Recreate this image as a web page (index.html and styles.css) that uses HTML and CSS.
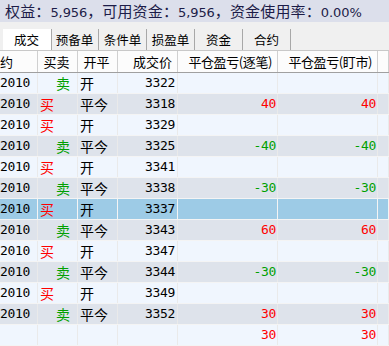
FILE: index.html
```html
<!DOCTYPE html>
<html>
<head>
<meta charset="utf-8">
<link rel="stylesheet" href="styles.css">
</head>
<body>
<div class="topbar">权益：<span class="tn">5,956</span>，可用资金：<span class="tn">5,956</span>，资金使用率：<span class="tn">0.00%</span></div>
<div class="tabs">
  <div class="tab active">成交</div>
  <div class="tab">预备单</div>
  <div class="tab">条件单</div>
  <div class="tab">损盈单</div>
  <div class="tab">资金</div>
  <div class="tab">合约</div>
</div>
<div class="grid">
  <div class="row head">
    <div class="c c1">约</div>
    <div class="c c2">买卖</div>
    <div class="c c3">开平</div>
    <div class="c c4">成交价</div>
    <div class="c c5">平仓盈亏(逐笔)</div>
    <div class="c c6">平仓盈亏(盯市)</div>
    <div class="c c7"></div>
  </div>
  <div class="row odd"><div class="c c1 num">2010</div><div class="c c2 sell">卖</div><div class="c c3">开</div><div class="c c4 num">3322</div><div class="c c5 num"></div><div class="c c6 num"></div><div class="c c7"></div></div>
  <div class="row even"><div class="c c1 num">2010</div><div class="c c2 buy">买</div><div class="c c3">平今</div><div class="c c4 num">3318</div><div class="c c5 num pos">40</div><div class="c c6 num pos">40</div><div class="c c7"></div></div>
  <div class="row odd"><div class="c c1 num">2010</div><div class="c c2 buy">买</div><div class="c c3">开</div><div class="c c4 num">3329</div><div class="c c5 num"></div><div class="c c6 num"></div><div class="c c7"></div></div>
  <div class="row even"><div class="c c1 num">2010</div><div class="c c2 sell">卖</div><div class="c c3">平今</div><div class="c c4 num">3325</div><div class="c c5 num neg">-40</div><div class="c c6 num neg">-40</div><div class="c c7"></div></div>
  <div class="row odd"><div class="c c1 num">2010</div><div class="c c2 buy">买</div><div class="c c3">开</div><div class="c c4 num">3341</div><div class="c c5 num"></div><div class="c c6 num"></div><div class="c c7"></div></div>
  <div class="row even"><div class="c c1 num">2010</div><div class="c c2 sell">卖</div><div class="c c3">平今</div><div class="c c4 num">3338</div><div class="c c5 num neg">-30</div><div class="c c6 num neg">-30</div><div class="c c7"></div></div>
  <div class="row sel"><div class="c c1 num">2010</div><div class="c c2 buy">买</div><div class="c c3">开</div><div class="c c4 num">3337</div><div class="c c5 num"></div><div class="c c6 num"></div><div class="c c7"></div></div>
  <div class="row even"><div class="c c1 num">2010</div><div class="c c2 sell">卖</div><div class="c c3">平今</div><div class="c c4 num">3343</div><div class="c c5 num pos">60</div><div class="c c6 num pos">60</div><div class="c c7"></div></div>
  <div class="row odd"><div class="c c1 num">2010</div><div class="c c2 buy">买</div><div class="c c3">开</div><div class="c c4 num">3347</div><div class="c c5 num"></div><div class="c c6 num"></div><div class="c c7"></div></div>
  <div class="row even"><div class="c c1 num">2010</div><div class="c c2 sell">卖</div><div class="c c3">平今</div><div class="c c4 num">3344</div><div class="c c5 num neg">-30</div><div class="c c6 num neg">-30</div><div class="c c7"></div></div>
  <div class="row odd"><div class="c c1 num">2010</div><div class="c c2 buy">买</div><div class="c c3">开</div><div class="c c4 num">3349</div><div class="c c5 num"></div><div class="c c6 num"></div><div class="c c7"></div></div>
  <div class="row even"><div class="c c1 num">2010</div><div class="c c2 sell">卖</div><div class="c c3">平今</div><div class="c c4 num">3352</div><div class="c c5 num pos">30</div><div class="c c6 num pos">30</div><div class="c c7"></div></div>
  <div class="row odd"><div class="c c1 num"></div><div class="c c2"></div><div class="c c3"></div><div class="c c4 num"></div><div class="c c5 num pos">30</div><div class="c c6 num pos">30</div><div class="c c7"></div></div>
</div>
</body>
</html>
```

FILE: styles.css
```css
html, body {
  margin: 0;
  padding: 0;
  background: #f0f0f0;
  overflow: hidden;
  font-family: "Noto Sans CJK SC", sans-serif;
}
.topbar {
  height: 22px;
  line-height: 21px;
  background: #dcdfeb;
  color: #1c1c48;
  font-size: 15px;
  padding-left: 5px;
  letter-spacing: 0.15px;
  white-space: nowrap;
}
.tn {
  font-family: "DejaVu Sans", sans-serif;
  font-size: 13px;
  letter-spacing: -0.1px;
}
.tabs {
  display: flex;
  height: 21px;
  margin-top: 7px;
  padding-left: 3px;
  font-size: 12.5px;
  color: #000;
}
.tab {
  width: 47px;
  height: 21px;
  line-height: 21px;
  text-align: center;
  border-right: 1px solid #a8a8a8;
}
.tab.active {
  background: #ffffff;
  border-right: 1px solid #ffffff;
  box-shadow: 1px 0 0 #a8a8a8;
}
.grid {
  border-top: 1px solid #c8c8c8;
}
.row {
  display: grid;
  grid-template-columns: 38px 40px 40px 60px 100px 100px 1fr;
  height: 21px;
  box-sizing: border-box;
  border-bottom: 1px solid #f4f4f4;
}
.row.head {
  height: 22px;
  background: #fcfcfc;
  border-bottom: 1px solid #a0a0a0;
}
.c {
  border-right: 1px solid #eaeaea;
  box-sizing: border-box;
  white-space: nowrap;
  overflow: hidden;
  line-height: 20px;
  font-size: 14px;
  color: #000;
}
.head .c {
  border-right: 1px solid #d0d0d0;
  line-height: 21px;
  font-size: 13px;
}
.head .c2, .head .c3 { text-align: center; padding-right: 4px; }
.head .c4, .head .c5, .head .c6 { text-align: right; padding-right: 5px; }
.head .c5, .head .c6 { letter-spacing: -0.4px; }
.odd { background: #f0f6fe; }
.even { background: #dee3eb; }
.sel { background: #9dcbe6; }
.sel .c { border-right-color: #f4f4f4; }
.num {
  font-family: "DejaVu Sans Mono", monospace;
  font-size: 13px;
  letter-spacing: -0.3px;
}
.c1.num { text-align: left; padding-left: 0; }
.c2 { padding-left: 2px; }
.c2.sell { padding-left: 18px; color: #00a000; }
.c2.buy { color: #ff0000; }
.c3 { padding-left: 2px; }
.c4 { text-align: right; padding-right: 2px; }
.c5, .c6 { text-align: right; padding-right: 1px; }
.pos { color: #ff0000; }
.neg { color: #00a000; }
```
